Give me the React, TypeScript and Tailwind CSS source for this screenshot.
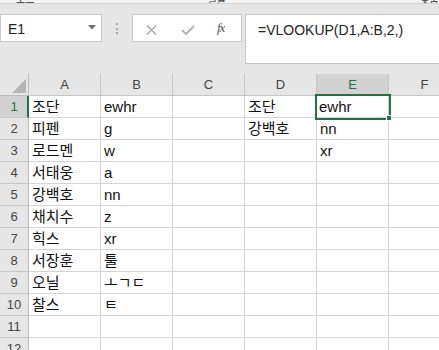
import React from "react";

const FONT = "font-['Liberation_Sans','Noto_Sans_CJK_KR',sans-serif]";

const COLS = ["A", "B", "C", "D", "E", "F"];

const DATA: string[][] = [
  ["조단", "ewhr", "", "조단", "ewhr", ""],
  ["피펜", "g", "", "강백호", "nn", ""],
  ["로드멘", "w", "", "", "xr", ""],
  ["서태웅", "a", "", "", "", ""],
  ["강백호", "nn", "", "", "", ""],
  ["채치수", "z", "", "", "", ""],
  ["힉스", "xr", "", "", "", ""],
  ["서장훈", "툴", "", "", "", ""],
  ["오닐", "ㅗㄱㄷ", "", "", "", ""],
  ["찰스", "ㅌ", "", "", "", ""],
  ["", "", "", "", "", ""],
  ["", "", "", "", "", ""],
];

function FormulaBar() {
  return (
    <div className="h-[70px] flex items-start pt-[10px]">
      {/* Name box */}
      <div className="w-[102px] h-[28px] shrink-0 bg-white border border-[#c6c6c6] flex items-start justify-between">
        <span className="pl-[7px] pt-[4px] text-[14px] leading-[20px] text-[#222]">E1</span>
        <svg width="8" height="5" viewBox="0 0 8 5" className="mt-[10px] mr-[5px]">
          <polygon points="0,0 8,0 4,4.5" fill="#6e6e6e" />
        </svg>
      </div>
      {/* dots */}
      <div className="w-[30px] shrink-0 flex justify-center pt-[9px]">
        <div className="flex flex-col gap-[2.5px]">
          <div className="w-[2px] h-[2px] bg-[#a9a9a9]" />
          <div className="w-[2px] h-[2px] bg-[#a9a9a9]" />
          <div className="w-[2px] h-[2px] bg-[#a9a9a9]" />
        </div>
      </div>
      {/* cancel / enter / fx */}
      <div className="w-[110px] h-[28px] shrink-0 bg-white border border-[#c6c6c6] flex items-start">
        <svg width="11" height="10" viewBox="0 0 11 10" className="mt-[10px] ml-[13px]">
          <path d="M1 0.5 L10 9.5 M10 0.5 L1 9.5" stroke="#a9a9a9" strokeWidth="1.4" fill="none" />
        </svg>
        <svg width="14" height="10" viewBox="0 0 14 10" className="mt-[10px] ml-[24px]">
          <path d="M1 5 L5 9 L13 1" stroke="#b3b3b3" strokeWidth="2" fill="none" />
        </svg>
        <span className="ml-[22px] mt-[6px] text-[13px] leading-[14px] italic font-['Liberation_Serif',serif] text-[#555] tracking-[-1px]">
          fx
        </span>
      </div>
      {/* formula input */}
      <div className="ml-[3px] h-[50px] flex-1 min-w-0 bg-white border border-[#c6c6c6] border-r-0 pl-[12px] pt-[3px]">
        <span className="text-[14px] leading-[20px] text-[#222] whitespace-nowrap">=VLOOKUP(D1,A:B,2,)</span>
      </div>
    </div>
  );
}

function RibbonEdge() {
  return (
    <div className="h-[4px] bg-[#f3f3f3] border-b border-[#d2d2d2] flex items-end overflow-hidden">
      <span className="ml-[16px] w-[20px] text-[10px] leading-[7px] text-[#333] whitespace-nowrap">보드</span>
      <span className="ml-[173px] w-[20px] text-[10px] leading-[7px] text-[#333] whitespace-nowrap">글꼴</span>
      <span className="ml-[194px] w-[20px] text-[10px] leading-[7px] text-[#333] whitespace-nowrap">맞춤</span>
    </div>
  );
}

function HeaderRow() {
  return (
    <div className="flex h-[22px]">
      <div className="w-[29px] h-[22px] shrink-0 border-r border-b border-[#bdbdbd] flex items-end justify-end pr-[2px] pb-[2px]">
        <svg width="14" height="14" viewBox="0 0 14 14">
          <polygon points="14,0 14,14 0,14" fill="#b5b5b5" />
        </svg>
      </div>
      {COLS.map((c) => {
        const sel = c === "E";
        return (
          <div
            key={c}
            className={
              sel
                ? "w-[72px] h-[22px] shrink-0 border-r border-[#c6c6c6] border-b-2 border-b-[#217346] bg-[#d2d2d2] text-[#217346] text-[13px] leading-[21px] text-center"
                : "w-[72px] h-[22px] shrink-0 border-r border-b border-[#c6c6c6] text-[#444] text-[13px] leading-[21px] text-center"
            }
          >
            {c}
          </div>
        );
      })}
    </div>
  );
}

function DataRow({ idx, cells }: { idx: number; cells: string[] }) {
  const selRow = idx === 1;
  return (
    <div className="flex h-[22px]">
      <div
        className={
          selRow
            ? "w-[29px] h-[22px] shrink-0 bg-[#d2d2d2] border-r-2 border-r-[#217346] border-b border-b-[#c6c6c6] text-[#217346] text-[13px] leading-[21px] text-center pl-[1px]"
            : "w-[29px] h-[22px] shrink-0 border-r border-r-[#bdbdbd] border-b border-b-[#c6c6c6] text-[#444] text-[13px] leading-[21px] text-center"
        }
      >
        {idx}
      </div>
      {cells.map((t, i) => {
        const selCell = selRow && i === 4;
        return (
          <div
            key={i}
            className={
              selCell
                ? "relative z-10 w-[72px] h-[22px] shrink-0 bg-white border-r border-b border-[#d4d4d4] pl-[2px] pt-[1px] text-[15px] leading-[20px] text-[#111] whitespace-nowrap"
                : "w-[72px] h-[22px] shrink-0 bg-white border-r border-b border-[#d4d4d4] pl-[3px] pt-[1px] text-[15px] leading-[20px] text-[#111] whitespace-nowrap"
            }
          >
            {t}
            {selCell && (
              <div className="absolute -left-[2px] -top-[2px] -right-[3px] -bottom-[3px] border-2 border-[#217346]">
                <div className="absolute -right-[3px] -bottom-[3px] w-[6px] h-[6px] bg-[#217346] border border-white" />
              </div>
            )}
          </div>
        );
      })}
    </div>
  );
}

export default function App() {
  return (
    <div className={`w-[439px] h-[350px] overflow-hidden bg-[#e6e6e6] ${FONT}`}>
      <RibbonEdge />
      <FormulaBar />
      <div className="w-[600px]">
        <HeaderRow />
        {DATA.map((row, i) => (
          <DataRow key={i} idx={i + 1} cells={row} />
        ))}
      </div>
    </div>
  );
}
